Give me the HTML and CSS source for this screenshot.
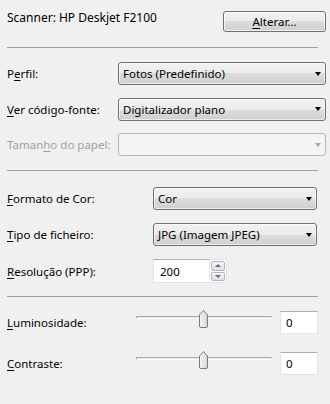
FILE: index.html
```html
<!DOCTYPE html>
<html lang="pt">
<head>
  <meta charset="UTF-8" />
  <title>Nova digitalização</title>
  <link rel="stylesheet" href="styles.css">
</head>
<body>
  <div class="dialog">
    <div class="scanner-row">
      <span class="scanner-name">Scanner: HP Deskjet F2100</span>
      <button class="btn"><u>A</u>lterar...</button>
    </div>

    <div class="sep"></div>

    <div class="group group-source">
      <div class="row">
        <span class="lbl">P<u>e</u>rfil:</span>
        <div class="combo"><span>Fotos (Predefinido)</span><span class="arrow"></span></div>
      </div>
      <div class="row">
        <span class="lbl"><u>V</u>er código-fonte:</span>
        <div class="combo"><span>Digitalizador plano</span><span class="arrow"></span></div>
      </div>
      <div class="row">
        <span class="lbl disabled">Taman<u>h</u>o do papel:</span>
        <div class="combo combo-disabled"><span></span><span class="arrow"></span></div>
      </div>
    </div>

    <div class="sep sep-mid"></div>

    <div class="group group-format">
      <div class="row">
        <span class="lbl"><u>F</u>ormato de Cor:</span>
        <div class="combo"><span>Cor</span><span class="arrow"></span></div>
      </div>
      <div class="row">
        <span class="lbl"><u>T</u>ipo de ficheiro:</span>
        <div class="combo"><span>JPG (Imagem JPEG)</span><span class="arrow"></span></div>
      </div>
      <div class="row row-spin">
        <span class="lbl"><u>R</u>esolução (PPP):</span>
        <div class="spin">
          <div class="edit edit-res">200</div>
          <div class="spin-btns">
            <div class="spin-btn"><span class="tri-up"></span></div>
            <div class="spin-btn"><span class="tri-down"></span></div>
          </div>
        </div>
      </div>
    </div>

    <div class="sep sep-low"></div>

    <div class="group group-adjust">
      <div class="row">
        <span class="lbl"><u>L</u>uminosidade:</span>
        <div class="slider">
          <div class="track"></div>
          <svg class="thumb" width="11" height="19" viewBox="0 0 11 19">
            <defs>
              <linearGradient id="tg1" x1="0" y1="0" x2="1" y2="0">
                <stop offset="0" stop-color="#f7f7f7"/>
                <stop offset="1" stop-color="#d6d6d6"/>
              </linearGradient>
            </defs>
            <path d="M1.5 17 V6 L5.5 1.5 L9.5 6 V17 Q9.5 18.5 8 18.5 H3 Q1.5 18.5 1.5 17 Z" fill="url(#tg1)" stroke="#7a7a7a"/>
          </svg>
        </div>
        <div class="edit edit-val">0</div>
      </div>
      <div class="row">
        <span class="lbl"><u>C</u>ontraste:</span>
        <div class="slider">
          <div class="track"></div>
          <svg class="thumb" width="11" height="19" viewBox="0 0 11 19">
            <defs>
              <linearGradient id="tg2" x1="0" y1="0" x2="1" y2="0">
                <stop offset="0" stop-color="#f7f7f7"/>
                <stop offset="1" stop-color="#d6d6d6"/>
              </linearGradient>
            </defs>
            <path d="M1.5 17 V6 L5.5 1.5 L9.5 6 V17 Q9.5 18.5 8 18.5 H3 Q1.5 18.5 1.5 17 Z" fill="url(#tg2)" stroke="#7a7a7a"/>
          </svg>
        </div>
        <div class="edit edit-val">0</div>
      </div>
    </div>
  </div>
</body>
</html>
```

FILE: styles.css
```css
* { margin: 0; padding: 0; box-sizing: border-box; }

body {
  background: #f0f0f0;
  font-family: 'Noto Sans', sans-serif;
  font-size: 11.5px;
  color: #000;
}

.dialog {
  width: 330px;
  height: 404px;
}

u { text-decoration: underline; text-underline-offset: 2px; }

/* top row */
.scanner-row {
  display: flex;
  justify-content: space-between;
  align-items: flex-start;
  padding: 11px 4px 0 7px;
}

.scanner-name {
  font-size: 12px;
  line-height: 16px;
  margin-top: -1px;
}

.btn {
  width: 103px;
  height: 21px;
  font: inherit;
  color: #000;
  border: 1px solid #707070;
  border-radius: 3px;
  background: linear-gradient(#f2f2f2 0%, #ebebeb 50%, #dddddd 50%, #cfcfcf 100%);
  box-shadow: inset 0 0 0 1px rgba(255, 255, 255, 0.7);
  line-height: 17px;
}

.sep {
  height: 1px;
  margin: 15px 12px 0 7px;
  background: #a0a0a0;
}

.sep-mid { margin-top: 14px; }
.sep-low { margin-top: 13px; }

/* groups */
.group {
  display: flex;
  flex-direction: column;
  padding-left: 7px;
}

.group-source { margin-top: 14px; gap: 12.5px; }
.group-format { margin-top: 16px; gap: 13px; }
.group-adjust { margin-top: 14px; gap: 18px; }

.row {
  display: flex;
  align-items: center;
  height: 23px;
}

.row-spin { height: 24px; }

.lbl { white-space: nowrap; }
.lbl.disabled { color: #a0a0a0; }

.group-source .lbl { width: 111px; }
.group-format .lbl { width: 146px; }
.group-adjust .lbl { width: 129px; }

/* combo boxes */
.combo {
  position: relative;
  display: flex;
  align-items: center;
  height: 23px;
  padding-left: 4px;
  border: 1px solid #707070;
  border-radius: 3px;
  background: linear-gradient(#f2f2f2 0%, #ebebeb 50%, #dddddd 50%, #cfcfcf 100%);
  box-shadow: inset 0 0 0 1px rgba(255, 255, 255, 0.6);
}

.group-source .combo { width: 208px; }
.group-format .combo { width: 164px; }

.arrow {
  margin-left: auto;
  margin-right: 4px;
  width: 0;
  height: 0;
  border-left: 3.5px solid transparent;
  border-right: 3.5px solid transparent;
  border-top: 4px solid #000;
}

.combo-disabled {
  border-color: #b5b5b5;
  background: #f4f4f4;
  box-shadow: none;
}

.combo-disabled .arrow { border-top-color: #a6a6a6; }

/* edit boxes */
.edit {
  display: flex;
  align-items: center;
  background: #fff;
  border: 1px solid #e2e3ea;
  border-top-color: #abadb3;
}

.spin {
  display: flex;
  height: 24px;
}

.edit-res {
  width: 57px;
  padding-left: 6px;
}

.spin-btns {
  display: flex;
  flex-direction: column;
  width: 17px;
  background: #fff;
  border: 1px solid #e2e3ea;
  border-left: none;
  padding: 1px;
  gap: 1px;
}

.spin-btn {
  flex: 1;
  display: flex;
  align-items: center;
  justify-content: center;
  border: 1px solid #b4b4b4;
  border-radius: 2px;
  background: linear-gradient(#f6f6f6, #dedede);
}

.tri-up, .tri-down {
  width: 0;
  height: 0;
  border-left: 3px solid transparent;
  border-right: 3px solid transparent;
}

.tri-up { border-bottom: 3px solid #4a6fb0; }
.tri-down { border-top: 3px solid #4a6fb0; }

/* sliders */
.slider {
  position: relative;
  align-self: flex-start;
  width: 136px;
  height: 23px;
  margin-right: 8px;
}

.track {
  margin-top: 5px;
  height: 3px;
  border: 1px solid #a8a8a8;
  border-right-color: #dcdcdc;
  border-bottom-color: #ffffff;
  background: #e7eaea;
}

.thumb {
  position: absolute;
  left: 62px;
  top: -2px;
}

.edit-val {
  width: 38px;
  height: 23px;
  padding-left: 5px;
}
```
